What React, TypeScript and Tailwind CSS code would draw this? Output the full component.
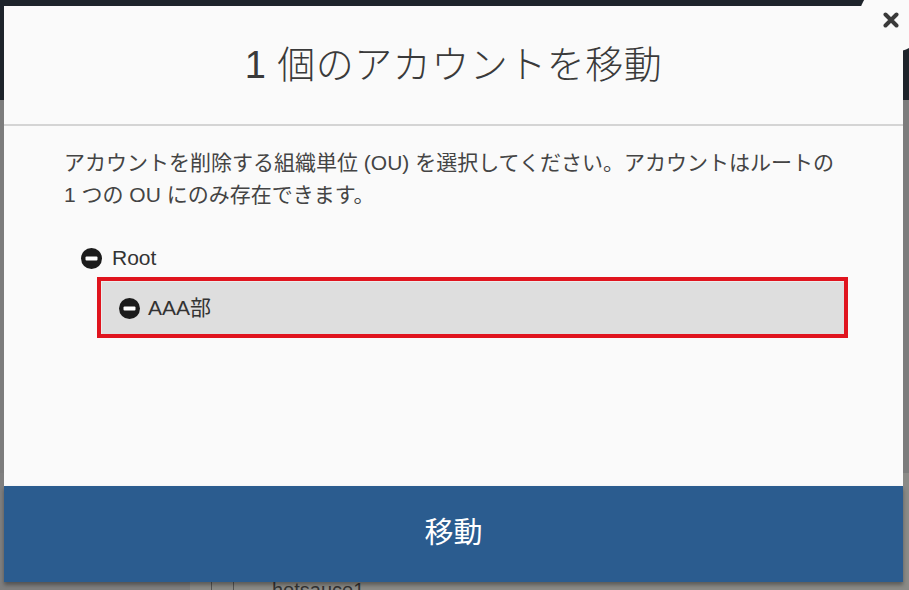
function MinusCircle() {
  return (
    <svg width="21" height="21" viewBox="0 0 21 21" className="shrink-0">
      <circle cx="10.5" cy="10.5" r="10.5" fill="#1c1c1c" />
      <rect x="4.5" y="8.5" width="12" height="4" rx="1" fill="#ffffff" />
    </svg>
  );
}

export default function App() {
  return (
    <div
      className="relative w-[909px] h-[590px] overflow-hidden bg-[#7c7c7c]"
      style={{ fontFamily: '"Liberation Sans", "Noto Sans CJK JP", sans-serif' }}
    >
      {/* page behind the overlay */}
      <div className="h-[100px] bg-[#1e242b]" />
      <div className="h-[373px]" />
      <div className="h-[117px] bg-[#7f7f7f] flex">
        <div className="w-[190px]" />
        <div className="flex-1 bg-[#8b8b87] flex items-end">
          <div className="w-[22px] h-[8px] border-r border-[#555]" />
          <div className="w-[22px] h-[8px] border-r border-[#555]" />
          <span className="ml-[38px] -mb-[10px] text-[20px] leading-[20px] text-[#333]">hotsauce1</span>
        </div>
      </div>

      {/* modal */}
      <div className="absolute left-[4px] top-[6px] w-[899px] h-[576px] bg-[#fafafa] flex flex-col">
        <div className="h-[120px] shrink-0 border-b-2 border-[#d4d4d4] flex items-center justify-center">
          <h1 className="text-[38px] font-light text-[#3a3a3a] tracking-[0.5px]">1 個のアカウントを移動</h1>
        </div>

        <div className="flex-1 px-[60px] pt-[21px]">
          <p className="text-[21px] leading-[32px] text-[#444]">
            アカウントを削除する組織単位 (OU) を選択してください。アカウントはルートの
            <br />1 つの OU にのみ存在できます。
          </p>

          <div className="mt-[31px] ml-[17px]">
            <div className="h-[32px] flex items-center gap-[10px] text-[21px] text-[#333]">
              <MinusCircle />
              <span>Root</span>
            </div>
            <div className="mt-[3px] ml-[16px] w-[751px] h-[61px] border-4 border-[#e0141e]">
              <div className="h-full bg-[#dedede] border-l border-t border-[#ececec] pl-[17px] flex items-center gap-[8px] text-[21px] text-[#333]">
                <MinusCircle />
                <span>AAA部</span>
              </div>
            </div>
          </div>
        </div>

        <button className="h-[96px] shrink-0 bg-[#2b5c8f] text-white text-[29px] shadow-[0_3px_4px_rgba(0,0,0,0.35)]">
          移動
        </button>
      </div>

      {/* close button */}
      <div className="absolute left-[859px] top-[-16px] w-[68px] h-[68px] rounded-full bg-[#fafafa] flex items-center justify-center">
        <svg width="16" height="16" viewBox="0 0 16 16" className="-translate-x-[2px] translate-y-[2px]">
          <path d="M2.5 2.5 L13.5 13.5 M13.5 2.5 L2.5 13.5" stroke="#3a3a3a" strokeWidth="4" strokeLinecap="round" />
        </svg>
      </div>
    </div>
  );
}
